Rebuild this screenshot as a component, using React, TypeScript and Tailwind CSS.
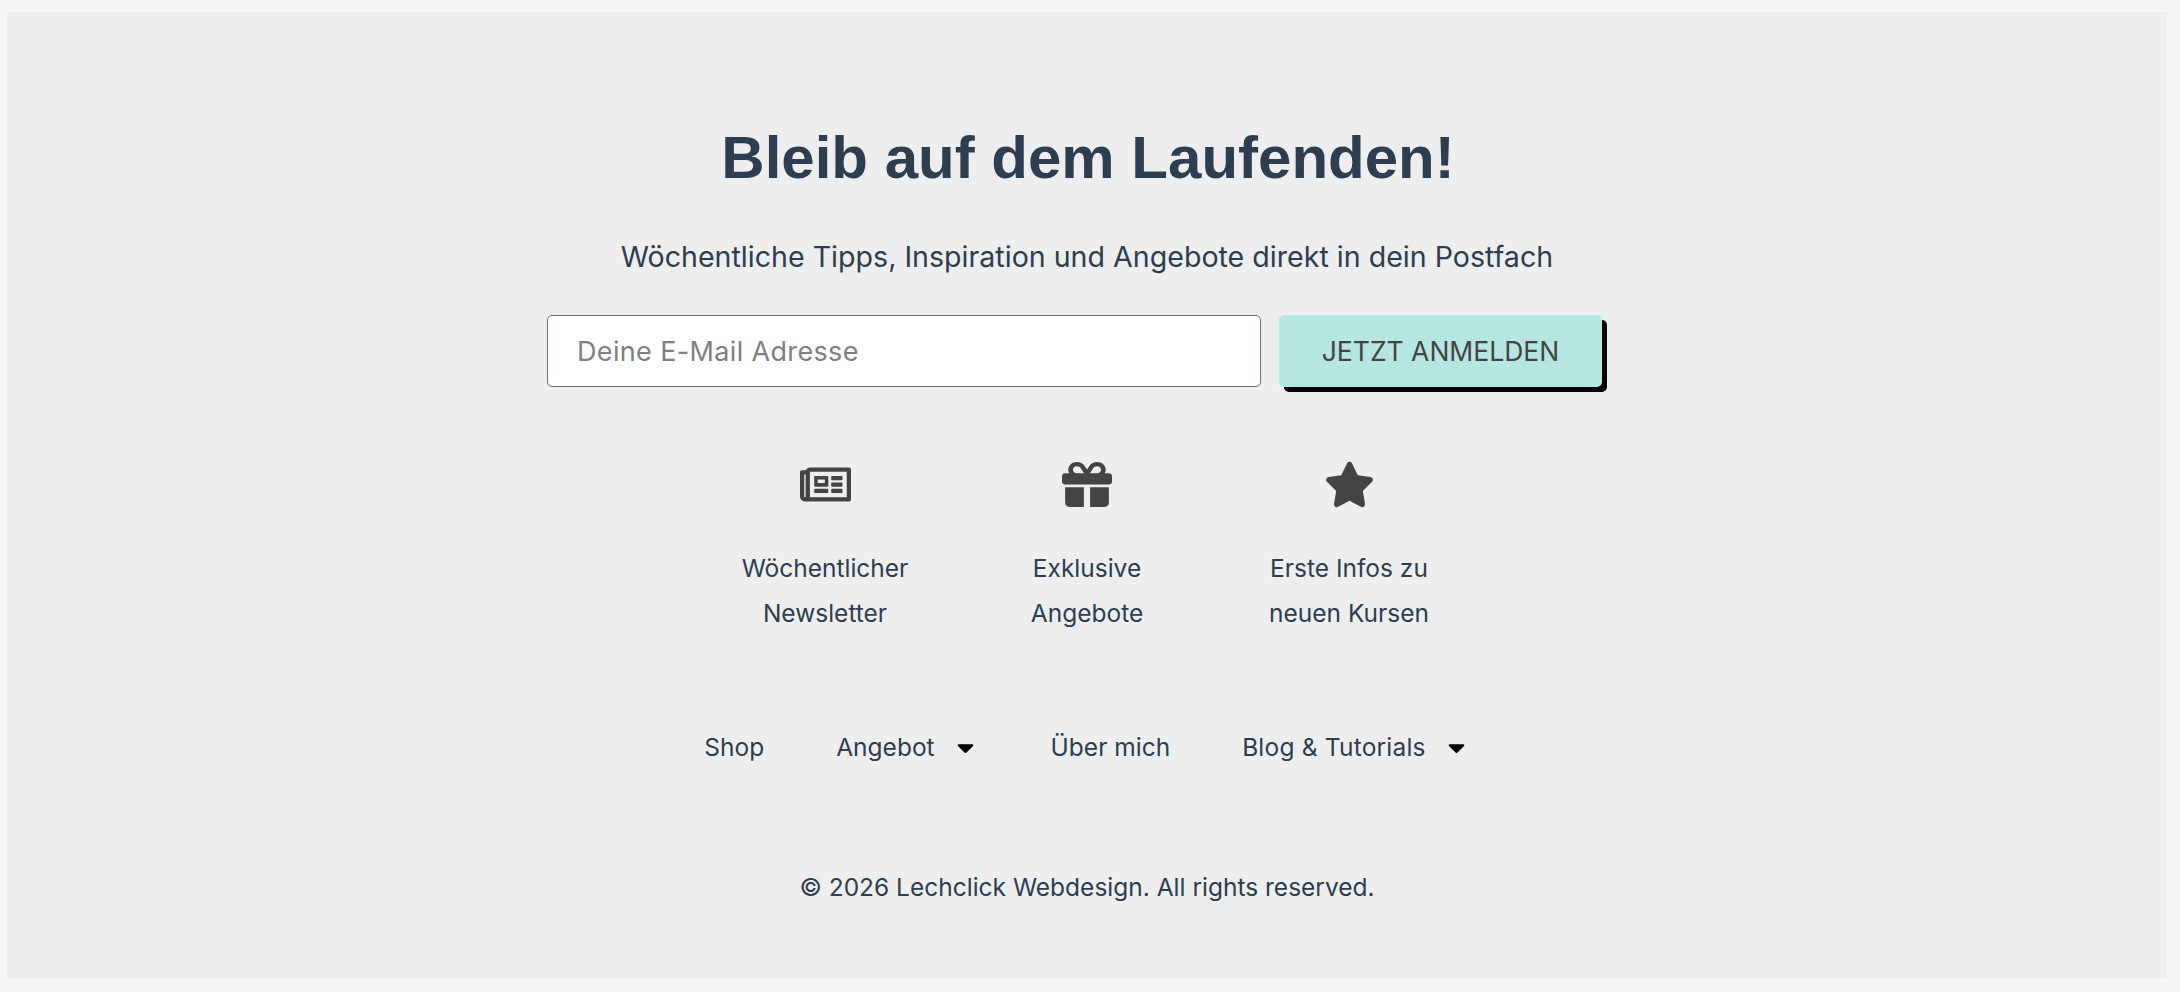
import React from 'react';
import { FaRegNewspaper, FaCaretDown } from 'react-icons/fa';
import { FaGift, FaStar } from 'react-icons/fa6';

const features = [
  { icon: <FaRegNewspaper size={51} />, lines: ['Wöchentlicher', 'Newsletter'] },
  { icon: <FaGift className="w-[50px] h-[45px]" preserveAspectRatio="none" />, lines: ['Exklusive', 'Angebote'] },
  { icon: <FaStar size={51} />, lines: ['Erste Infos zu', 'neuen Kursen'] },
];

const navItems = [
  { label: 'Shop', caret: false, extra: '' },
  { label: 'Angebot', caret: true, extra: '' },
  { label: 'Über mich', caret: false, extra: '' },
  { label: 'Blog & Tutorials', caret: true, extra: 'tracking-[0.2px]' },
];

const App: React.FC = () => {
  return (
    <div className="h-[992px] bg-[#f5f5f5] pt-3 pl-[7px] pr-[13px] pb-[14px] font-['Inter',sans-serif] text-[#2d3e50]">
      <footer className="h-full bg-[#eeeeee] flex flex-col items-center">
        <h2 className="mt-[110px] ml-[2px] font-['Liberation_Sans',sans-serif] font-bold text-[60px] leading-[72px] text-[#2d3e50]">
          Bleib auf dem Laufenden!
        </h2>
        <p className="mt-[41px] text-[28.6px] leading-[44px]">
          Wöchentliche Tipps, Inspiration und Angebote direkt in dein Postfach
        </p>
        <form className="mt-[36px] mr-[25px] flex gap-[18px]">
          <input
            type="email"
            placeholder="Deine E-Mail Adresse"
            className="w-[714px] h-[72px] px-[29px] bg-white border border-[#6b7280] rounded-[5px] font-['Inter',sans-serif] text-[27px] tracking-[0.35px] placeholder:text-[#808080]"
          />
          <button
            type="button"
            className="w-[323px] h-[72px] pt-[2px] bg-[#b5e6e1] rounded-[5px] shadow-[5px_5px_0_#000] font-['Inter',sans-serif] text-[26.5px] text-[#444444]"
          >
            JETZT ANMELDEN
          </button>
        </form>
        <div className="mt-[72px] flex gap-[52px]">
          {features.map((f) => (
            <div key={f.lines[0]} className="w-[210px] flex flex-col items-center text-center text-[24.5px] leading-[45px]">
              <div className="h-[50px] flex items-center text-[#444444]">{f.icon}</div>
              <div className="mt-[37px]">
                {f.lines.map((l) => (
                  <div key={l}>{l}</div>
                ))}
              </div>
            </div>
          ))}
        </div>
        <nav className="mt-[89px] flex gap-[72px] text-[24.5px] leading-[45px]">
          {navItems.map((n) => (
            <a key={n.label} href="#" className={`flex items-center ${n.extra}`}>
              {n.label}
              {n.caret && <FaCaretDown size={27} className="ml-[17px] text-black" />}
            </a>
          ))}
        </nav>
        <p className="mt-[95px] text-[24.5px] leading-[45px]">© 2026 Lechclick Webdesign. All rights reserved.</p>
      </footer>
    </div>
  );
};

export default App;
